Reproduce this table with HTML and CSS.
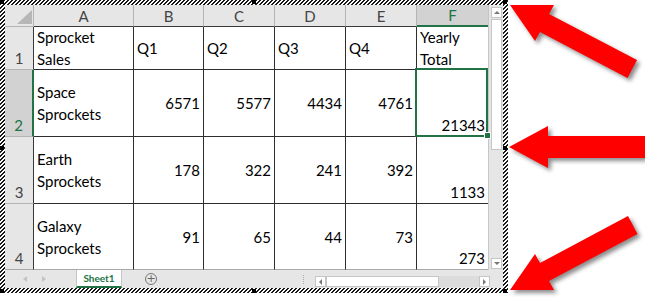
FILE: index.html
```html
<!DOCTYPE html>
<html>
<head>
<meta charset="utf-8">
<link rel="stylesheet" href="styles.css">
</head>
<body>
<div class="stage">
  <div class="object">
    <div class="sheet">
      <div class="main">
        <div class="grid">
          <div class="corner"><span class="tri"></span></div>
          <div class="ch">A</div>
          <div class="ch">B</div>
          <div class="ch">C</div>
          <div class="ch">D</div>
          <div class="ch">E</div>
          <div class="ch ch-sel">F</div>

          <div class="rh">1</div>
          <div class="c">Sprocket<br>Sales</div>
          <div class="c">Q1</div>
          <div class="c">Q2</div>
          <div class="c">Q3</div>
          <div class="c">Q4</div>
          <div class="c cf">Yearly<br>Total</div>

          <div class="rh rh-sel">2</div>
          <div class="c">Space<br>Sprockets</div>
          <div class="c num">6571</div>
          <div class="c num">5577</div>
          <div class="c num">4434</div>
          <div class="c num">4761</div>
          <div class="c cf num bot active">21343</div>

          <div class="rh">3</div>
          <div class="c">Earth<br>Sprockets</div>
          <div class="c num">178</div>
          <div class="c num">322</div>
          <div class="c num">241</div>
          <div class="c num">392</div>
          <div class="c cf num bot">1133</div>

          <div class="rh last">4</div>
          <div class="c last">Galaxy<br>Sprockets</div>
          <div class="c num last">91</div>
          <div class="c num last">65</div>
          <div class="c num last">44</div>
          <div class="c num last">73</div>
          <div class="c cf num bot last">273</div>
        </div>
        <div class="vscroll">
          <div class="vbtn"><span class="up"></span></div>
          <div class="vthumb"></div>
          <div class="vfill"></div>
          <div class="vbtn"><span class="down"></span></div>
        </div>
      </div>
      <div class="tabbar">
        <div class="nav"><span class="nl"></span><span class="nr"></span></div>
        <div class="tab">Sheet1</div>
        <div class="plus">+</div>
        <div class="spacer"></div>
        <div class="dots"></div>
        <div class="hscroll">
          <div class="hbtn"><span class="hl"></span></div>
          <div class="hthumb"></div>
          <div class="htrack"></div>
          <div class="hbtn"><span class="hr"></span></div>
        </div>
      </div>
    </div>
    <span class="handle h-tl"></span>
    <span class="handle h-tm"></span>
    <span class="handle h-tr"></span>
    <span class="handle h-ml"></span>
    <span class="handle h-mr"></span>
    <span class="handle h-bl"></span>
    <span class="handle h-bm"></span>
    <span class="handle h-br"></span>
  </div>
  <svg class="arrows" width="645" height="298" viewBox="0 0 645 298">
    <polygon points="510,5 554,5 549,14 637,60 627.5,78 540,32 535,41"/>
    <polygon points="509,147 548,126 548,136 650,136 650,158 548,158 548,168"/>
    <polygon points="510,290 535,254 540,263 628,216 637.5,234 549,281 554,290"/>
  </svg>
</div>
</body>
</html>
```

FILE: styles.css
```css
* { box-sizing: border-box; margin: 0; padding: 0; }
body { margin: 0; background: #fff; font-family: Lato, "Open Sans", sans-serif; }

.stage { position: relative; width: 645px; height: 298px; overflow: hidden; }

.object {
  position: relative;
  width: 508px;
  height: 293px;
  padding: 5px;
  background: repeating-linear-gradient(135deg, #1a1a1a 0 1.4142px, #fff 1.4142px 2.8284px);
}

.sheet { width: 498px; height: 283px; background: #fff; display: flex; flex-direction: column; }
.main { display: flex; height: 265px; }

.grid {
  display: grid;
  grid-template-columns: 29px 100px 70px 71px 71px 71px 71px;
  grid-template-rows: 22px 43px 67px 67px 66px;
  width: 483px;
  font-size: 15px;
  line-height: 22px;
  color: #000;
}

.corner {
  background: #e6e6e6;
  border-right: 1px solid #b4b4b4;
  border-bottom: 1px solid #b4b4b4;
  display: flex;
  align-items: flex-end;
  justify-content: flex-end;
  padding: 0 1px 2px 0;
}
.tri { width: 15px; height: 14px; background: #b7b7b7; clip-path: polygon(100% 0, 100% 100%, 0 100%); }

.ch {
  background: #e6e6e6;
  border-right: 1px solid #b4b4b4;
  border-bottom: 1px solid #3a3a3a;
  display: flex;
  align-items: center;
  justify-content: center;
  color: #444;
}
.ch-sel { background: #d2d2d2; color: #217346; border-right: 0; border-bottom: 2px solid #217346; }

.rh {
  background: #e6e6e6;
  border-right: 1px solid #3a3a3a;
  border-bottom: 1px solid #b4b4b4;
  display: flex;
  align-items: flex-end;
  justify-content: center;
  color: #444;
}
.rh-sel { background: #d2d2d2; color: #217346; border-right: 2px solid #217346; }

.c {
  border-right: 1px solid #2e2e2e;
  border-bottom: 1px solid #2e2e2e;
  padding: 0 3px;
  display: flex;
  flex-direction: column;
  justify-content: center;
}
.num { text-align: right; }
.bot { justify-content: flex-end; }
.cf { border-right: 0; }
.last { border-bottom: 1px solid #a8a8a8; }
.rh.last { border-bottom: 1px solid #a8a8a8; }

.active { position: relative; }
.active::after {
  content: "";
  position: absolute;
  top: -2px; left: -2px; right: 0; bottom: -1px;
  border: 2px solid #217346;
}
.active::before {
  content: "";
  position: absolute;
  right: -3px; bottom: -3px;
  width: 5px; height: 5px;
  background: #217346;
  border: 1px solid #fff;
  z-index: 1;
}

.vscroll {
  width: 15px;
  background: #e6e6e6;
  border-left: 1px solid #c6c6c6;
  display: flex;
  flex-direction: column;
  padding: 2px 1px 1px 2px;
  gap: 1px;
}
.vbtn {
  height: 11px;
  background: #fff;
  border: 1px solid #c6c6c6;
  display: flex;
  align-items: center;
  justify-content: center;
}
.up { width: 0; height: 0; border-left: 3px solid transparent; border-right: 3px solid transparent; border-bottom: 3px solid #777; }
.down { width: 0; height: 0; border-left: 3px solid transparent; border-right: 3px solid transparent; border-top: 3px solid #777; }
.vthumb { height: 131px; background: #fff; border: 1px solid #c6c6c6; }
.vfill { flex: 1; }

.tabbar {
  height: 18px;
  background: #e6e6e6;
  display: flex;
  align-items: stretch;
}
.nav { width: 71px; display: flex; align-items: center; padding-left: 18px; gap: 15px; }
.nl { width: 0; height: 0; border-top: 3px solid transparent; border-bottom: 3px solid transparent; border-right: 4px solid #c2c2c2; }
.nr { width: 0; height: 0; border-top: 3px solid transparent; border-bottom: 3px solid transparent; border-left: 4px solid #c2c2c2; }
.tab {
  width: 46px;
  background: #fff;
  border-left: 1px solid #c6c6c6;
  border-right: 1px solid #c6c6c6;
  border-bottom: 2px solid #217346;
  color: #217346;
  font-weight: bold;
  font-size: 10px;
  line-height: 15px;
  text-align: center;
  padding-top: 1px;
}
.plus {
  align-self: center;
  margin-left: 23px;
  width: 12px;
  height: 12px;
  border: 1px solid #777;
  border-radius: 50%;
  color: #666;
  font-family: "DejaVu Sans", sans-serif;
  font-size: 11px;
  line-height: 10px;
  text-align: center;
}
.spacer { flex: 1; }
.dots { align-self: center; width: 1px; height: 9px; border-left: 1px dotted #aaa; margin-right: 11px; }
.hscroll {
  width: 175px;
  height: 11px;
  margin-top: 6px;
  margin-right: 13px;
  display: flex;
  background: #dcdcdc;
}
.hbtn {
  width: 11px;
  background: #fff;
  border: 1px solid #c6c6c6;
  display: flex;
  align-items: center;
  justify-content: center;
}
.hl { width: 0; height: 0; border-top: 3px solid transparent; border-bottom: 3px solid transparent; border-right: 3px solid #777; }
.hr { width: 0; height: 0; border-top: 3px solid transparent; border-bottom: 3px solid transparent; border-left: 3px solid #777; }
.hthumb { width: 113px; background: #fff; border: 1px solid #c6c6c6; }
.htrack { flex: 1; }

.handle { position: absolute; width: 4px; height: 4px; background: #000; }
.h-tl { left: 0; top: 0; }
.h-tm { left: 252px; top: 0; }
.h-tr { left: 503px; top: 0; }
.h-ml { left: 0; top: 146px; }
.h-mr { left: 503px; top: 146px; }
.h-bl { left: 0; top: 289px; }
.h-bm { left: 252px; top: 289px; }
.h-br { left: 503px; top: 289px; }

.arrows {
  position: absolute;
  left: 0;
  top: 0;
  fill: #ff0000;
  filter: drop-shadow(3px 3px 2px rgba(0, 0, 0, 0.45));
  pointer-events: none;
}
```
